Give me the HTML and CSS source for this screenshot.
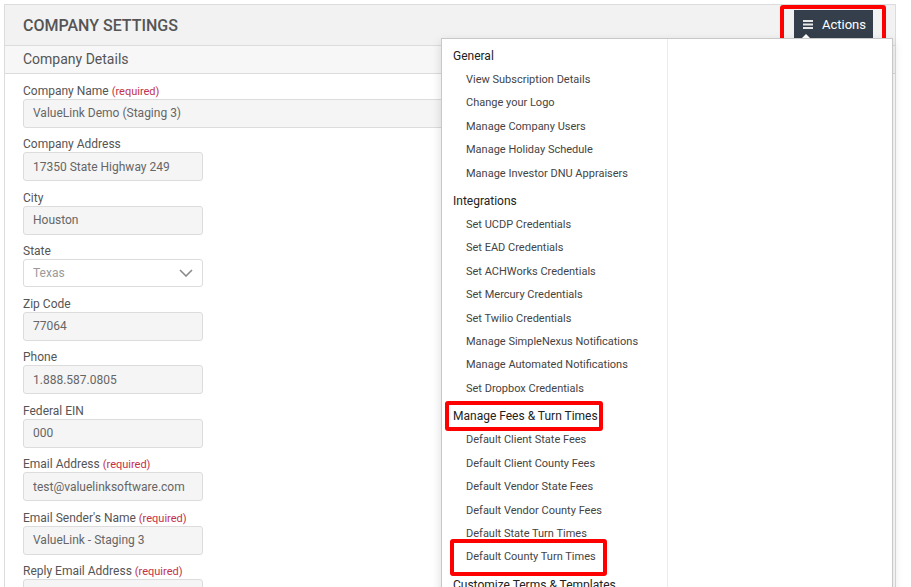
FILE: index.html
```html
<!DOCTYPE html>
<html lang="en">
<head>
    <meta charset="UTF-8">
    <meta name="viewport" content="width=device-width, initial-scale=1.0">
    <title>Company Settings</title>
    <link rel="stylesheet" href="styles.css">
</head>
<body>
    <div class="panel">
        <header class="panel-title">
            <h1>Company Settings</h1>
            <div class="actions">
                <button class="actions-btn hl hl-btn">
                    <svg width="10" height="9" viewBox="0 0 10 9"><rect y="0" width="10" height="2"/><rect y="3.5" width="10" height="2"/><rect y="7" width="10" height="2"/></svg>
                    Actions
                </button>
                <div class="menu">
                    <div class="menu-col">
                        <div class="menu-head">General</div>
                        <a href="#" class="menu-item">View Subscription Details</a>
                        <a href="#" class="menu-item">Change your Logo</a>
                        <a href="#" class="menu-item">Manage Company Users</a>
                        <a href="#" class="menu-item">Manage Holiday Schedule</a>
                        <a href="#" class="menu-item">Manage Investor DNU Appraisers</a>

                        <div class="menu-head">Integrations</div>
                        <a href="#" class="menu-item">Set UCDP Credentials</a>
                        <a href="#" class="menu-item">Set EAD Credentials</a>
                        <a href="#" class="menu-item">Set ACHWorks Credentials</a>
                        <a href="#" class="menu-item">Set Mercury Credentials</a>
                        <a href="#" class="menu-item">Set Twilio Credentials</a>
                        <a href="#" class="menu-item">Manage SimpleNexus Notifications</a>
                        <a href="#" class="menu-item">Manage Automated Notifications</a>
                        <a href="#" class="menu-item">Set Dropbox Credentials</a>

                        <div class="menu-head hl hl-head">Manage Fees &amp; Turn Times</div>
                        <a href="#" class="menu-item">Default Client State Fees</a>
                        <a href="#" class="menu-item">Default Client County Fees</a>
                        <a href="#" class="menu-item">Default Vendor State Fees</a>
                        <a href="#" class="menu-item">Default Vendor County Fees</a>
                        <a href="#" class="menu-item">Default State Turn Times</a>
                        <a href="#" class="menu-item hl hl-item">Default County Turn Times</a>

                        <div class="menu-head">Customize Terms &amp; Templates</div>
                    </div>
                    <div class="menu-col menu-col-empty"></div>
                </div>
            </div>
        </header>

        <div class="section-title">Company Details</div>

        <form class="form">
            <div class="form-group">
                <label>Company Name <span class="req">(required)</span></label>
                <input type="text" class="input input-wide" value="ValueLink Demo (Staging 3)">
            </div>
            <div class="form-group">
                <label>Company Address</label>
                <input type="text" class="input" value="17350 State Highway 249">
            </div>
            <div class="form-group">
                <label>City</label>
                <input type="text" class="input" value="Houston">
            </div>
            <div class="form-group">
                <label>State</label>
                <div class="select">
                    <span>Texas</span>
                    <svg width="14" height="8" viewBox="0 0 14 8"><path d="M1 1l6 6 6-6" fill="none" stroke="#8a8a8a" stroke-width="1.6"/></svg>
                </div>
            </div>
            <div class="form-group">
                <label>Zip Code</label>
                <input type="text" class="input" value="77064">
            </div>
            <div class="form-group">
                <label>Phone</label>
                <input type="text" class="input" value="1.888.587.0805">
            </div>
            <div class="form-group">
                <label>Federal EIN</label>
                <input type="text" class="input" value="000">
            </div>
            <div class="form-group">
                <label>Email Address <span class="req">(required)</span></label>
                <input type="text" class="input" value="test@valuelinksoftware.com">
            </div>
            <div class="form-group">
                <label>Email Sender's Name <span class="req">(required)</span></label>
                <input type="text" class="input" value="ValueLink - Staging 3">
            </div>
            <div class="form-group">
                <label>Reply Email Address <span class="req">(required)</span></label>
                <input type="text" class="input" value="">
            </div>
        </form>
    </div>
</body>
</html>
```

FILE: styles.css
```css
:root {
    --border-color: #dcdcdc;
    --text-color: #555;
    --input-bg: #f5f5f5;
    --btn-color: #343f4b;
    --required-color: #c4314b;
    --mark-color: #ff0000;
}

html, body {
    height: 100%;
    overflow: hidden;
}

body {
    font-family: Roboto, "Liberation Sans", Arial, sans-serif;
    margin: 0;
    background-color: white;
    color: var(--text-color);
}

.panel {
    margin: 4px 15px 0 4px;
    border: 1px solid var(--border-color);
    border-bottom: none;
    min-height: 100%;
}

.panel-title {
    display: flex;
    justify-content: space-between;
    align-items: center;
    height: 40px;
    padding: 0 22px 0 18px;
    background-color: #f2f2f2;
    border-bottom: 1px solid var(--border-color);
}

.panel-title h1 {
    margin: 0;
    font-size: 16px;
    font-weight: 500;
    text-transform: uppercase;
    color: #555;
}

.section-title {
    height: 27px;
    line-height: 27px;
    padding: 0 18px;
    font-size: 14px;
    background-color: #f7f7f7;
    border-bottom: 1px solid var(--border-color);
}

/* annotation boxes */
.hl {
    position: relative;
}

.hl::after {
    content: "";
    position: absolute;
    border: 4px solid var(--mark-color);
    border-radius: 3px;
    pointer-events: none;
}

.hl-btn::after {
    top: -5px;
    bottom: -10px;
    left: -14px;
    right: -13px;
}

.hl-head::after {
    top: -3px;
    bottom: -3px;
    left: 3px;
    right: 64px;
}

.hl-item::after {
    top: -6px;
    bottom: -7px;
    left: 8px;
    right: 60px;
}

.actions {
    position: relative;
    align-self: flex-start;
    margin-top: 5px;
}

.actions-btn {
    display: flex;
    align-items: center;
    gap: 9px;
    height: 28px;
    padding: 0 7px 0 9px;
    border: none;
    background-color: var(--btn-color);
    color: white;
    font-family: inherit;
    font-size: 13px;
}

.actions-btn svg {
    fill: #e8e8e8;
}

/* caret under the button */
.actions-btn::before {
    content: "";
    position: absolute;
    left: 8px;
    bottom: 0;
    border: 4px solid transparent;
    border-bottom-color: white;
    border-top: none;
}

.menu {
    position: absolute;
    top: 28px;
    right: -20px;
    width: 450px;
    height: 560px;
    display: flex;
    background-color: white;
    border: 1px solid #c8c8c8;
    box-shadow: 0 4px 10px rgba(0,0,0,0.15);
    z-index: 5;
}

.menu-col {
    width: 225px;
    padding: 5px 0;
    border-right: 1px solid #ebebeb;
}

.menu-col-empty {
    flex-grow: 1;
    border-right: none;
}

.menu-head {
    display: block;
    line-height: 24px;
    margin-top: 4px;
    padding-left: 11px;
    font-size: 12px;
    color: #222;
    white-space: nowrap;
}

.menu-head:first-child {
    margin-top: 0;
}

.menu-item {
    display: block;
    line-height: 23.4px;
    padding-left: 24px;
    font-size: 11px;
    color: #444;
    text-decoration: none;
}

.form {
    padding: 9.5px 18px 0;
}

.form-group {
    margin-bottom: 9.5px;
}

label {
    display: block;
    font-size: 12px;
    line-height: 15px;
}

.req {
    font-size: 11px;
    color: var(--required-color);
}

.input,
.select {
    box-sizing: border-box;
    width: 180px;
    height: 29px;
    margin: 0;
    padding: 0 9px;
    border: 1px solid var(--border-color);
    border-radius: 3px;
    background-color: var(--input-bg);
    font-family: inherit;
    font-size: 12px;
    color: #666;
}

.input-wide {
    width: 100%;
}

.select {
    display: flex;
    align-items: center;
    justify-content: space-between;
    height: 28px;
    background-color: white;
    color: #9a9a9a;
}
```
